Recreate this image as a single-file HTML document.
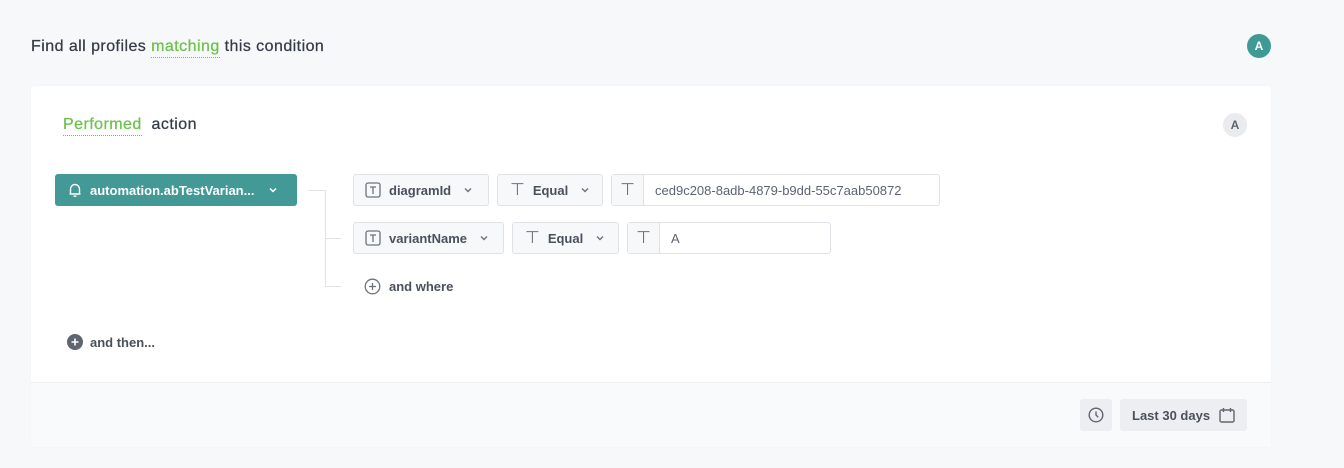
<!DOCTYPE html>
<html><head><style>
*{box-sizing:border-box;margin:0;padding:0}
body{width:1344px;height:468px;background:#f7f8fa;font-family:"Liberation Sans",sans-serif;position:relative;overflow:hidden;color:#353b47}
.a{position:absolute}
.card{left:31px;top:86px;width:1240px;height:361px;background:#fff;border-radius:3px;box-shadow:0 0 2px rgba(0,0,0,.03)}
.foot{left:31px;top:382px;width:1240px;height:65px;background:#f9fafb;border-top:1px solid #eceef1}
.box{position:absolute;height:32px;border:1px solid #dfe2e6;border-radius:3px;background:#f7f8fa;display:flex;align-items:center;font-size:13px;font-weight:bold;color:#4a505c}
.green{color:#6cc24a;border-bottom:1px dotted #6cc24a}
.line{position:absolute;background:#dfe2e6}
.tt{font-weight:normal;font-size:17px;color:#6b717c}
.h{font-size:16px;letter-spacing:0.45px;-webkit-text-stroke:0.25px #353b47}
</style></head><body>
<div class="a h" style="left:31px;top:38px;">Find all profiles <span class="green" style="padding-bottom:2px;-webkit-text-stroke:0.25px #6cc24a">matching</span> this condition</div>
<div class="a" style="left:1247px;top:34px;width:24px;height:24px;border-radius:50%;background:#3f9a96;color:#fff;font-size:12px;font-weight:bold;text-align:center;line-height:24px">A</div>
<div class="a card"></div>
<div class="a foot"></div>
<div class="a h" style="left:63px;top:116px;"><span class="green" style="padding-bottom:2px;-webkit-text-stroke:0.25px #6cc24a">Performed</span>&nbsp; action</div>
<div class="a" style="left:1223px;top:113px;width:24px;height:24px;border-radius:50%;background:#e9ebee;color:#5d6370;font-size:12px;font-weight:bold;text-align:center;line-height:24px">A</div>

<div class="a" style="left:55px;top:174px;width:242px;height:32px;background:#439996;border-radius:3px;color:#fff;font-size:13px;font-weight:bold;display:flex;align-items:center">
<svg style="margin-left:13px" width="14" height="16" viewBox="0 0 14 16" fill="none" stroke="#fff" stroke-width="1.4"><path d="M2.5 12V7a4.5 4.5 0 0 1 9 0v5H2.5zM1.5 12h11M5.5 14.2h3"/></svg>
<span style="margin-left:8px">automation.abTestVarian...</span>
<svg style="margin-left:14px" width="10" height="6" viewBox="0 0 10 6" fill="none" stroke="#fff" stroke-width="1.5"><path d="M2 1.5l3 3 3-3"/></svg></div>

<div class="line" style="left:309px;top:190px;width:16px;height:1px"></div>
<div class="line" style="left:325px;top:190px;width:1px;height:97px"></div>
<div class="line" style="left:325px;top:238px;width:16px;height:1px"></div>
<div class="line" style="left:325px;top:286px;width:16px;height:1px"></div>

<div class="box" style="left:353px;top:174px;width:136px"><svg style="margin-left:11px" width="16" height="16" viewBox="0 0 16 16" fill="none" stroke="#6b717c" stroke-width="1.3"><rect x="1" y="1" width="14" height="14" rx="2"/><path d="M5 5h6M8 5v7"/></svg><span style="margin-left:8px">diagramId</span><svg style="margin-left:12px" width="10" height="6" viewBox="0 0 10 6" fill="none" stroke="#6b717c" stroke-width="1.4"><path d="M2 1.5l3 3 3-3"/></svg></div>
<div class="box" style="left:497px;top:174px;width:106px"><span class="tt" style="margin-left:12px">⊤</span><span style="margin-left:8px">Equal</span><svg style="margin-left:12px" width="10" height="6" viewBox="0 0 10 6" fill="none" stroke="#6b717c" stroke-width="1.4"><path d="M2 1.5l3 3 3-3"/></svg></div>
<div class="box" style="left:611px;top:174px;width:329px;background:#fff"><div class="tt" style="width:32px;height:30px;background:#f7f8fa;border-right:1px solid #dfe2e6;text-align:center;line-height:30px">⊤</div><span style="margin-left:11px;font-weight:normal;color:#5d6370">ced9c208-8adb-4879-b9dd-55c7aab50872</span></div>

<div class="box" style="left:353px;top:222px;width:151px"><svg style="margin-left:11px" width="16" height="16" viewBox="0 0 16 16" fill="none" stroke="#6b717c" stroke-width="1.3"><rect x="1" y="1" width="14" height="14" rx="2"/><path d="M5 5h6M8 5v7"/></svg><span style="margin-left:8px">variantName</span><svg style="margin-left:12px" width="10" height="6" viewBox="0 0 10 6" fill="none" stroke="#6b717c" stroke-width="1.4"><path d="M2 1.5l3 3 3-3"/></svg></div>
<div class="box" style="left:512px;top:222px;width:107px"><span class="tt" style="margin-left:12px">⊤</span><span style="margin-left:8px">Equal</span><svg style="margin-left:12px" width="10" height="6" viewBox="0 0 10 6" fill="none" stroke="#6b717c" stroke-width="1.4"><path d="M2 1.5l3 3 3-3"/></svg></div>
<div class="box" style="left:627px;top:222px;width:204px;background:#fff"><div class="tt" style="width:32px;height:30px;background:#f7f8fa;border-right:1px solid #dfe2e6;text-align:center;line-height:30px">⊤</div><span style="margin-left:11px;font-weight:normal;color:#5d6370">A</span></div>

<div class="a" style="left:364px;top:278px;display:flex;align-items:center;font-size:13px;font-weight:bold;color:#4a505c"><svg width="17" height="17" viewBox="0 0 17 17" fill="none" stroke="#6b717c" stroke-width="1.3"><circle cx="8.5" cy="8.5" r="7.3"/><path d="M8.5 5v7M5 8.5h7"/></svg><span style="margin-left:8px">and where</span></div>

<div class="a" style="left:67px;top:334px;display:flex;align-items:center;font-size:13px;font-weight:bold;color:#4a505c"><svg width="16" height="16" viewBox="0 0 16 16"><circle cx="8" cy="8" r="8" fill="#5f6570"/><path d="M8 4.5v7M4.5 8h7" stroke="#fff" stroke-width="1.6"/></svg><span style="margin-left:7px">and then...</span></div>

<div class="a" style="left:1080px;top:399px;width:32px;height:32px;background:#eceef1;border-radius:3px;display:flex;align-items:center;justify-content:center"><svg width="16" height="16" viewBox="0 0 16 16" fill="none" stroke="#5f6570" stroke-width="1.4"><circle cx="8" cy="8" r="6.8"/><path d="M8 4.5V8l2.2 2.2"/></svg></div>
<div class="a" style="left:1120px;top:399px;width:127px;height:32px;background:#eceef1;border-radius:3px;display:flex;align-items:center;font-size:13px;font-weight:bold;color:#4a505c"><span style="margin-left:12px">Last 30 days</span><svg style="margin-left:9px" width="16" height="16" viewBox="0 0 16 16" fill="none" stroke="#5f6570" stroke-width="1.4"><rect x="1" y="3" width="14" height="12" rx="1.5"/><path d="M4.5 1v4M11.5 1v4"/></svg></div>
</body></html>
